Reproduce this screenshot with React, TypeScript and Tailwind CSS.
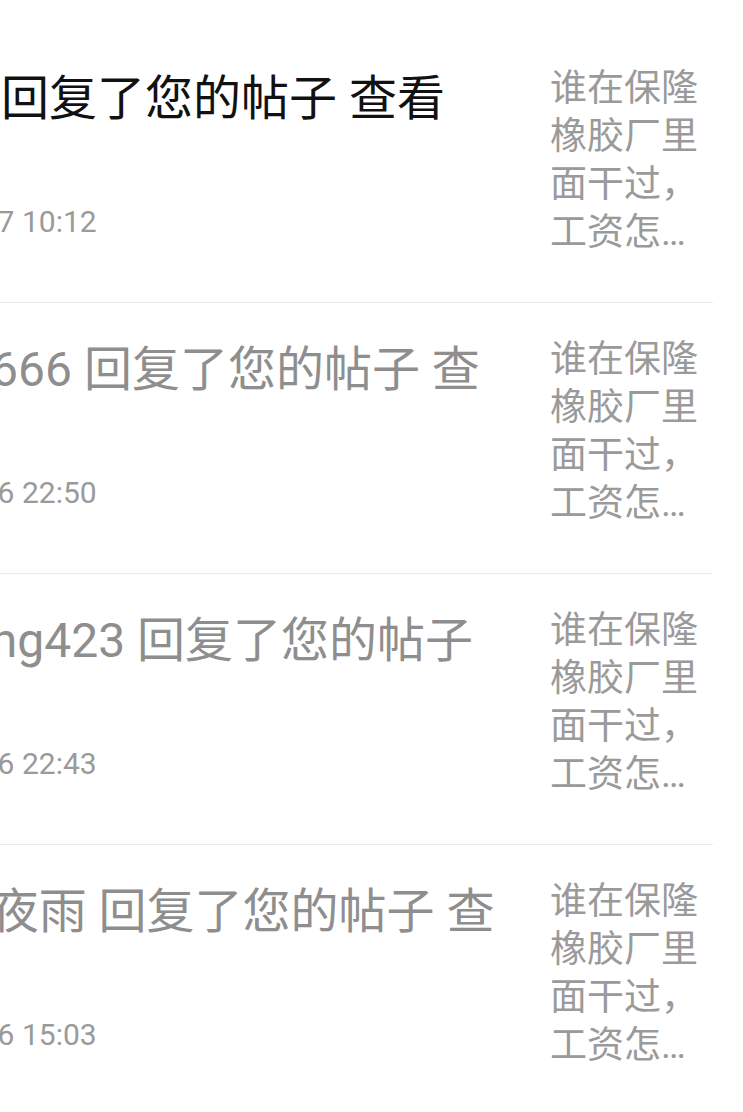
const items = [
  { user: 'Kevin', time: '2023-05-27 10:12', unread: true },
  { user: 'Nicky666', time: '2023-05-26 22:50', unread: false },
  { user: 'Liuming423', time: '2023-05-26 22:43', unread: false },
  { user: '听风_夜雨', time: '2023-05-26 15:03', unread: false },
]

const post = '谁在保隆橡胶厂里面干过，工资怎么样？'

const NoticeRow = ({ item }) => {
  return (
    <div className="flex items-start h-[271px] border-b border-[#ebebeb] pt-[33px] pr-[13px]">
      <div className="w-[636px]">
        <div
          className={`mt-[6px] h-[56px] overflow-hidden pl-[4px] text-[48px] leading-[56px] ${
            item.unread ? 'text-[#111111]' : 'text-[#8e8e8e]'
          }`}
        >
          {item.user} 回复了您的帖子 查看
        </div>
        <div className="mt-[77px] -ml-[6px] text-[30px] leading-[36px] text-[#9a9a9a]">{item.time}</div>
      </div>
      <div className="ml-[45px] w-[150px] text-[37px] leading-[48px] text-[#9a9a9a] line-clamp-4">
        {post}
      </div>
    </div>
  )
}

export default function App() {
  return (
    <div className="min-h-screen overflow-hidden bg-white font-['Roboto','Noto_Sans_CJK_SC',sans-serif]">
      <div className="-ml-[131px] mr-[30px] pt-[32px]">
        {items.map((item, index) => (
          <NoticeRow key={index} item={item} />
        ))}
      </div>
    </div>
  )
}
